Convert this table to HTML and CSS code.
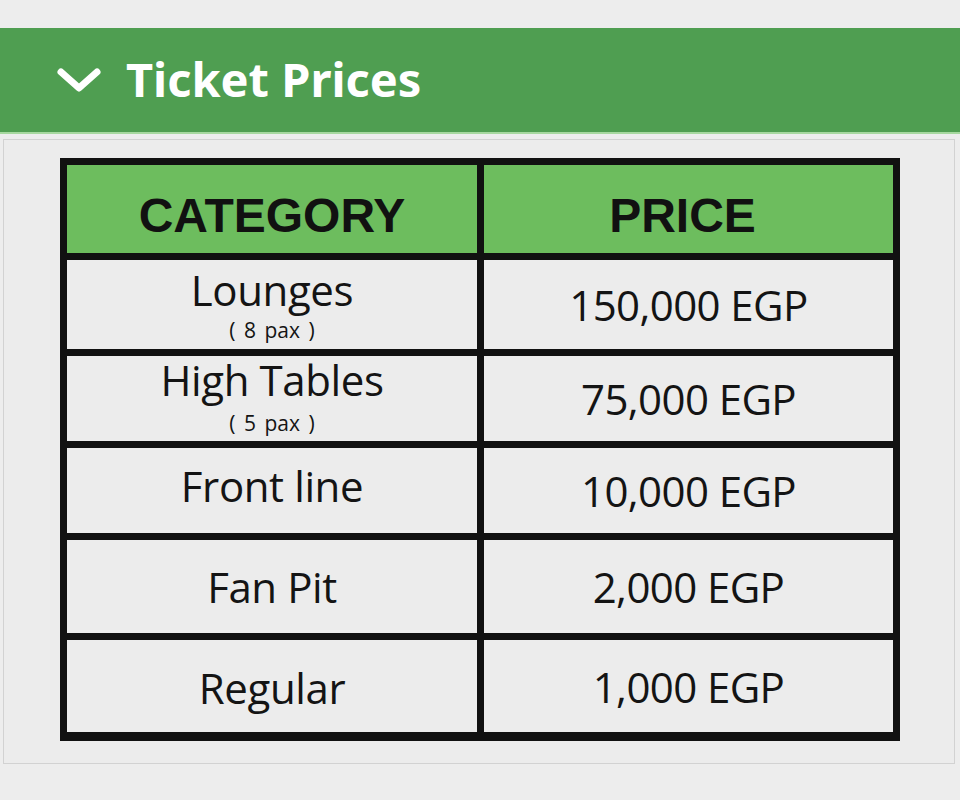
FILE: index.html
```html
<!DOCTYPE html>
<html>
<head>
<meta charset="utf-8">
<link rel="stylesheet" href="styles.css">
</head>
<body>
<div class="top-space"></div>
<div class="accordion-head">
  <svg class="chev" width="50" height="40" viewBox="0 0 50 40">
    <polyline points="7,7 25,23 43,7" fill="none" stroke="#fff" stroke-width="7" stroke-linecap="round" stroke-linejoin="round"/>
  </svg>
  <span class="title">Ticket Prices</span>
</div>
<div class="panel">
  <table class="prices">
    <thead>
      <tr class="r-head"><th>CATEGORY</th><th class="ph">PRICE</th></tr>
    </thead>
    <tbody>
      <tr class="r1"><td class="c"><div class="cat">Lounges</div><div class="pax">( 8 pax )</div></td><td class="price">150,000 EGP</td></tr>
      <tr class="r2"><td class="c"><div class="cat">High Tables</div><div class="pax">( 5 pax )</div></td><td class="price">75,000 EGP</td></tr>
      <tr class="r3"><td class="c"><div class="cat">Front line</div></td><td class="price">10,000 EGP</td></tr>
      <tr class="r4"><td class="c"><div class="cat">Fan Pit</div></td><td class="price">2,000 EGP</td></tr>
      <tr class="r5"><td class="c"><div class="cat">Regular</div></td><td class="price">1,000 EGP</td></tr>
    </tbody>
  </table>
</div>
</body>
</html>
```
FILE: styles.css
```css
html, body {
  margin: 0;
  padding: 0;
  background: #ededed;
}
.top-space {
  height: 28px;
}
.accordion-head {
  height: 104px;
  background: #4f9e51;
  border-bottom: 2px solid #a6d89f;
  display: flex;
  align-items: center;
}
.chev {
  margin-left: 54px;
  margin-top: 10px;
  flex: none;
}
.title {
  margin-left: 22px;
  color: #fff;
  font-family: "Noto Sans", sans-serif;
  font-weight: 700;
  font-size: 47px;
  line-height: 1;
  margin-top: -2px;
}
.panel {
  margin: 5px 0 0 3px;
  border: 1px solid #d2d2d2;
  padding: 18px 0 22px 56px;
  box-sizing: border-box;
  width: 952px;
  background: #ececec;
}
.prices {
  border-collapse: separate;
  border-spacing: 0;
  width: 840px;
  border-top: 7px solid #111;
  border-left: 7px solid #111;
  table-layout: fixed;
  font-family: "Open Sans", sans-serif;
  color: #141414;
}
.prices th, .prices td {
  box-sizing: border-box;
  border-right: 7px solid #111;
  border-bottom: 7px solid #111;
  padding: 0;
  text-align: center;
  vertical-align: middle;
}
.prices th:first-child, .prices td:first-child {
  width: 417px;
}
.prices th {
  background: #6dbd5e;
  font-family: "Liberation Sans", Arial, sans-serif;
  font-weight: 700;
  font-size: 48px;
  line-height: normal;
  color: #111;
  height: 95px;
  padding-top: 12px;
}
.prices th.ph {
  padding-right: 12px;
}
.prices td {
  background: #ececec;
}
.cat {
  font-size: 42px;
  line-height: 42px;
  letter-spacing: -0.4px;
}
.pax {
  font-size: 21px;
  line-height: 22px;
  word-spacing: 3px;
}
.price {
  font-size: 42px;
  letter-spacing: -0.6px;
}
.r1 td { height: 96px; }
.r1 .pax { margin-top: 8px; }
.r2 td { height: 92px; }
.r2 .pax { margin-top: 11px; }
.r2 td.c { padding-bottom: 5px; }
.r3 td { height: 92px; }
.r3 td.c { padding-bottom: 10px; }
.r4 td { height: 100px; }
.r5 td { height: 101px; border-bottom-width: 9px; }
.r5 td.c { padding-top: 4px; }
```
